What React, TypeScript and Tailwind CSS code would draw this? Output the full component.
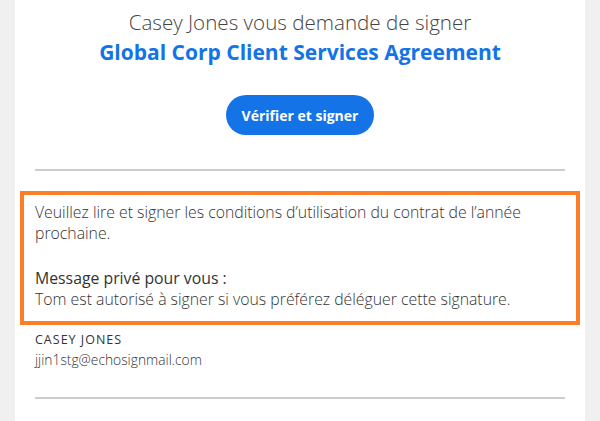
import React from "react";

export default function App() {
  const font = { fontFamily: '"Open Sans", "Noto Sans", sans-serif' };
  return (
    <div className="w-[600px] h-[421px] bg-[#f0f0f0] overflow-hidden" style={font}>
      <div className="mx-[15px] w-[570px] h-full bg-white px-[20px]">
        <div className="pt-[7px] text-center">
          <div className="text-[20.6px] leading-[30px] font-light text-[#444]">Casey Jones vous demande de signer</div>
          <div className="text-[21px] leading-[30px] font-bold text-[#1473e6]">Global Corp Client Services Agreement</div>
        </div>
        <div className="flex justify-center mt-[28px]">
          <div className="h-[40px] px-[16px] rounded-full bg-[#1473e6] text-white font-bold text-[14px] flex items-center">Vérifier et signer</div>
        </div>
        <div className="mt-[34px] h-[2px] bg-[#cccccc]"></div>
        <div className="mt-[20px] -mx-[15px] border-[4px] border-[#fd7e27] pl-[11px] pr-[11px] pt-[7px] pb-[11px] text-[15.8px] leading-[21px] font-light text-[#333]">
          <div>Veuillez lire et signer les conditions d’utilisation du contrat de l’année prochaine.</div>
          <div className="h-[24px]"></div>
          <div className="font-normal">Message privé pour vous :</div>
          <div>Tom est autorisé à signer si vous préférez déléguer cette signature.</div>
        </div>
        <div className="mt-[6px] text-[12.5px] leading-[18px] tracking-[0.08em] uppercase text-[#333]">Casey Jones</div>
        <div className="mt-[1px] text-[13.8px] font-light text-[#333] leading-[20px]">jjin1stg@echosignmail.com</div>
        <div className="mt-[27px] h-[2px] bg-[#cccccc]"></div>
      </div>
    </div>
  );
}
